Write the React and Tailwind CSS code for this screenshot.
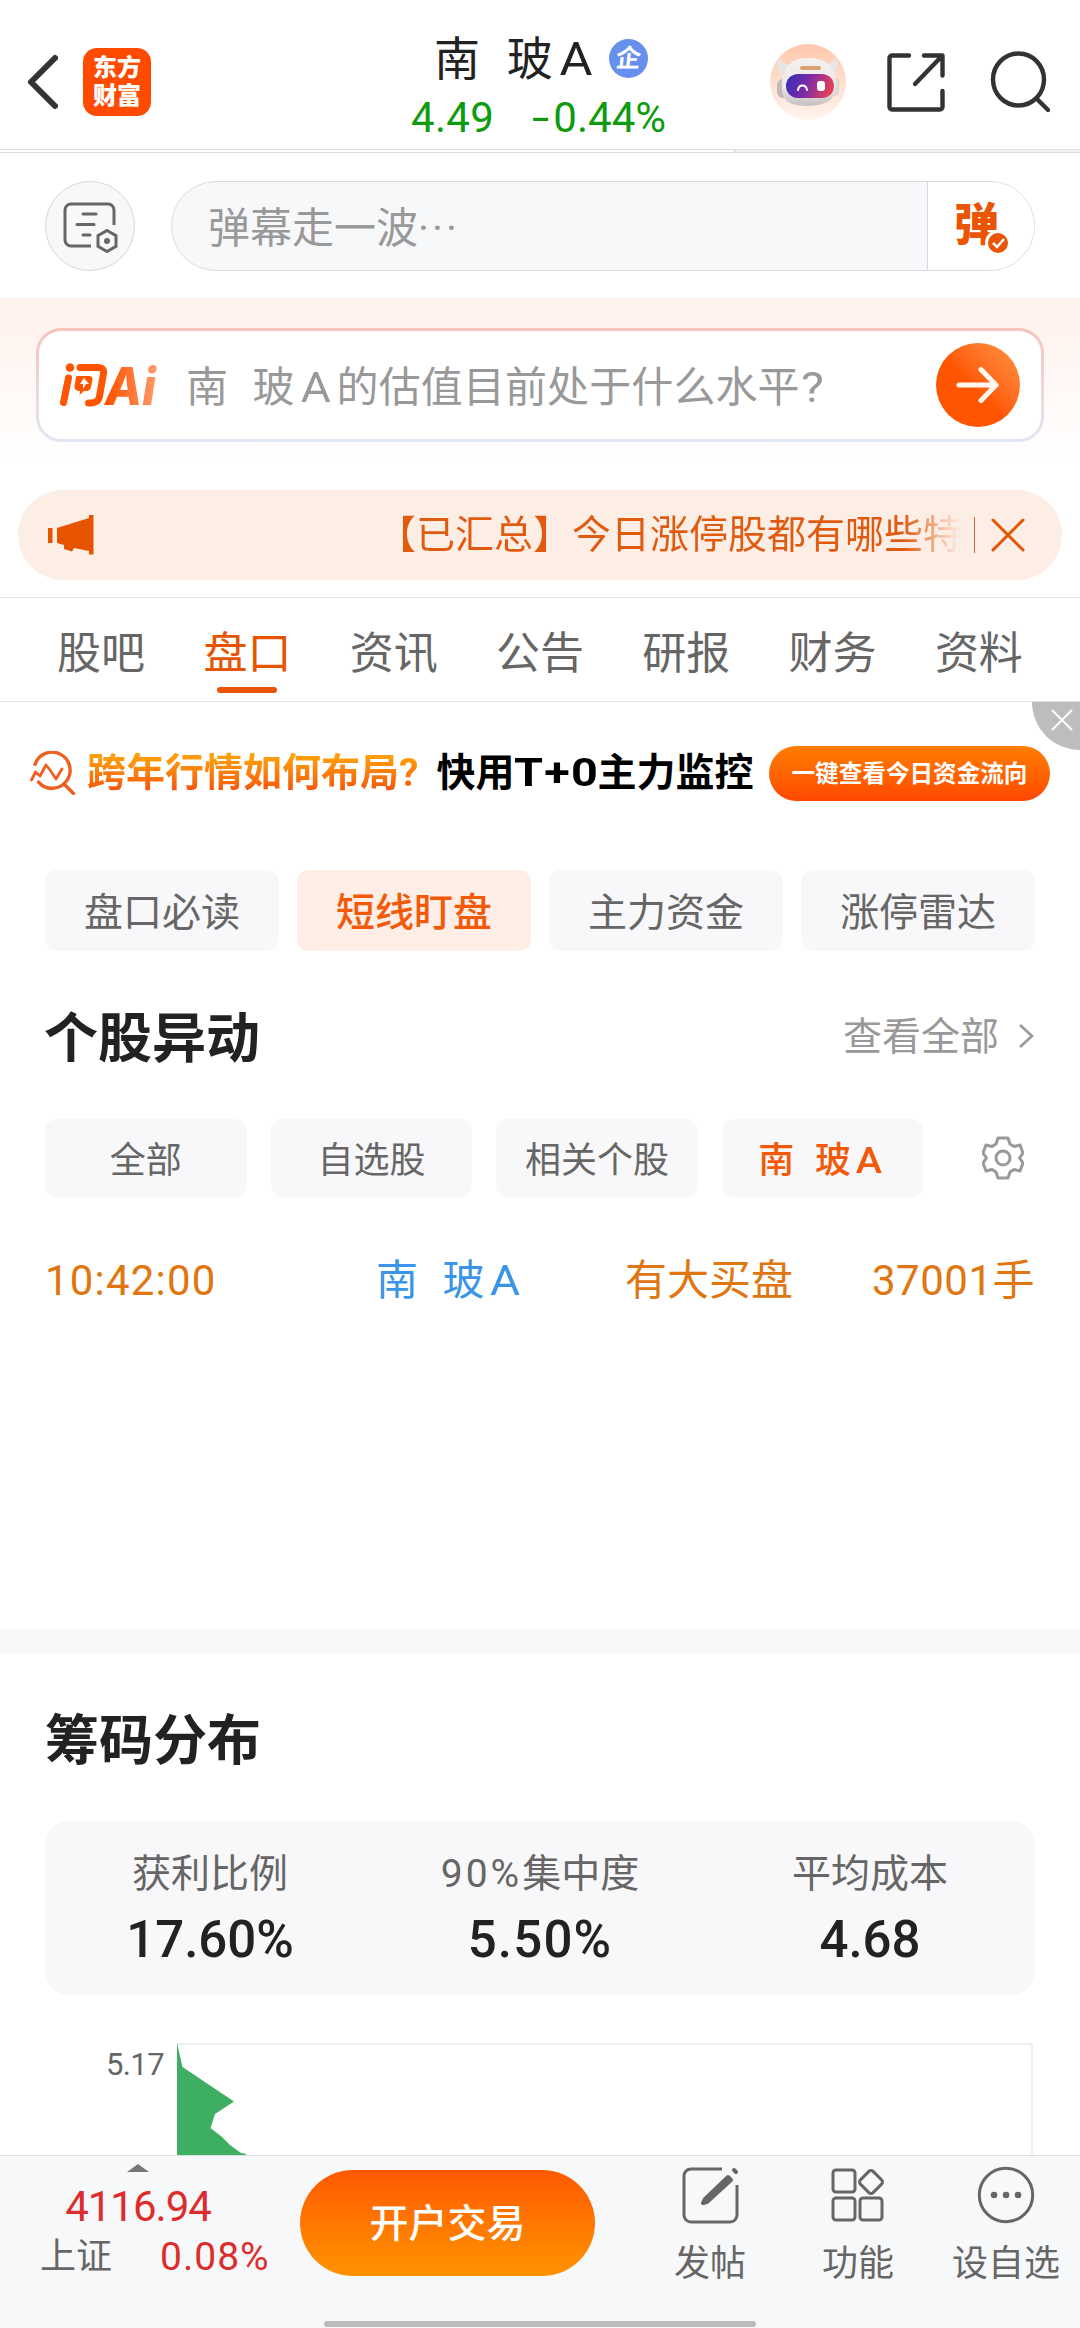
import clsx from 'clsx'

const TABS = ['股吧', '盘口', '资讯', '公告', '研报', '财务', '资料']
const SECTIONS = ['盘口必读', '短线盯盘', '主力资金', '涨停雷达']
const FILTERS = ['全部', '自选股', '相关个股']

const STATS = [
  { label: '获利比例', value: '17.60%' },
  { prefix: '90%', label: '集中度', value: '5.50%', valueClass: 'tracking-[1.200px]' },
  { label: '平均成本', value: '4.68' },
]

// the trailing letter takes a full character cell, like the hanzi before it
function StockName() {
  return (
    <span className="whitespace-pre">
      南<span className="inline-block w-[0.58em]"> </span>玻<span className="inline-block w-[1em] scale-x-110 text-center">A</span>
    </span>
  )
}

function RobotAvatar() {
  return (
    <svg viewBox="0 0 76 76" className="h-[76px] w-[76px]">
      <defs>
        <linearGradient id="avatarBg" x1="0" y1="0" x2="0" y2="1">
          <stop offset="0" stopColor="#ffc8ac" />
          <stop offset="1" stopColor="#fff4ee" />
        </linearGradient>
        <linearGradient id="visor" x1="0" y1="0" x2="1" y2="0.2">
          <stop offset="0" stopColor="#2f2fb4" />
          <stop offset="0.5" stopColor="#7a2aa8" />
          <stop offset="1" stopColor="#e0405c" />
        </linearGradient>
        <linearGradient id="helmet" x1="0" y1="0" x2="0" y2="1">
          <stop offset="0" stopColor="#f6f1f1" />
          <stop offset="0.6" stopColor="#ece7e7" />
          <stop offset="1" stopColor="#c6c0c0" />
        </linearGradient>
      </defs>
      <circle cx="38" cy="38" r="38" fill="url(#avatarBg)" />
      <path d="M12 33c-6-6-7-14-4-20 2 6 8 8 17 8zM65 31c4-7 4-13 0-18-2 6-7 7-15 7z" fill="#ebe3e2" />
      <rect x="7" y="35" width="12" height="19" rx="6" fill="#bfb9ba" />
      <rect x="60" y="34" width="9" height="18" rx="4.500" fill="#dcd6d7" />
      <path d="M38 14c17 0 27 8 28 23 1 12-3 18-9 21-10 5-28 5-37 1-7-3-9-11-8-22 2-15 10-23 26-23z" fill="url(#helmet)" />
      <rect x="30" y="22" width="21" height="4" rx="2" fill="#dfa070" />
      <rect x="16" y="30" width="48" height="24" rx="12" fill="url(#visor)" />
      <path d="M28 46c1-6 8-6 9 0" fill="none" stroke="#fff" strokeWidth="2" strokeLinecap="round" />
      <rect x="47" y="37" width="8" height="10" rx="3" fill="#fff" />
    </svg>
  )
}

function Header() {
  return (
    <header className="flex h-[149px] items-start">
      <svg viewBox="0 0 32 56" className="mt-[54px] ml-[26px] h-14 w-8" fill="none" stroke="#333" strokeWidth="6" strokeLinecap="round" strokeLinejoin="round">
        <path d="M29 4 5 28l24 24" />
      </svg>
      <div className="mt-12 ml-[25px] flex h-[68px] w-[68px] flex-col items-center justify-center rounded-[14px] bg-[#ff4a00] text-[24px] leading-[28px] font-black text-white">
        <span>东方</span>
        <span>财富</span>
      </div>
      <div className="mt-[30px] ml-[260px] w-[255px]">
        <div className="flex h-14 items-center pl-[23px]">
          <h1 className="pt-0.5 text-[46px] leading-[56px] text-[#222]"><StockName /></h1>
          <span className="ml-2.5 flex h-[39px] w-[39px] items-center justify-center rounded-full bg-[#6790ec] text-[25px] leading-none font-bold text-white">
            <span className="-skew-x-6">企</span>
          </span>
        </div>
        <div className="flex h-[60px] items-center justify-between pt-0.5 text-[42px] text-[#0f9b0f]">
          <span className="tracking-[0.300px]">4.49</span>
          <span><span className="mr-[7px] inline-block scale-x-150">-</span>0.44%</span>
        </div>
      </div>
      <div className="mt-[44px] ml-[104px]">
        <RobotAvatar />
      </div>
      <svg viewBox="0 0 58 60" className="mt-[53px] ml-[41px] h-[60px] w-[58px]" fill="none" stroke="#333" strokeWidth="4.400" strokeLinecap="round" strokeLinejoin="round">
        <path d="M22 2.500H5A2.500 2.500 0 0 0 2.500 5v49A2.500 2.500 0 0 0 5 56.500h48a2.500 2.500 0 0 0 2.500-2.500V38M37 2.500h18.500v20M54 4 28 31" />
      </svg>
      <svg viewBox="0 0 60 64" className="mt-[50px] ml-[45px] h-16 w-[60px]" fill="none" stroke="#333" strokeWidth="4.400" strokeLinecap="round">
        <ellipse cx="28.500" cy="29.500" rx="25.500" ry="26" />
        <path d="m47 49 11 11" />
      </svg>
    </header>
  )
}

function CommentBar() {
  return (
    <div className="flex h-[145px] items-center pt-0.5 pr-[45px] pb-0.5 pl-[45px]">
      <button className="flex h-[90px] w-[90px] items-center justify-center rounded-full border border-[#d5d7da] bg-[#f7f8fa]">
        <svg viewBox="0 0 56 52" className="mt-0.5 ml-0.5 h-[52px] w-14" fill="none" stroke="#666" strokeWidth="3" strokeLinecap="round">
          <path d="M51 24V9a6 6 0 0 0-6-6H8a6 6 0 0 0-6 6v30a6 6 0 0 0 6 6h20" strokeLinecap="butt" />
          <path d="M20 13h13M14 23.500h17M20 34h7" />
          <path d="m44 29.500 9 5.200v10.600l-9 5.200-9-5.200V34.700z" />
          <circle cx="44" cy="40" r="3" fill="#666" stroke="none" />
        </svg>
      </button>
      <div className="ml-9 flex h-[90px] flex-1 overflow-hidden rounded-full border border-[#d9dbde] bg-[#f7f8fa]">
        <span className="flex-1 pl-9 text-[42px] leading-[93px] text-[#999]">弹幕走一波<span className="tracking-[3px]">···</span></span>
        <button className="flex w-[107px] items-center border-l border-[#d9dbde] bg-white pl-[26px]">
          <span className="relative text-[45px] leading-[60px] font-black text-[#e95504]">
            弹
            <svg viewBox="0 0 26 26" className="absolute top-[34px] left-[31px] h-[26px] w-[26px]">
              <circle cx="13" cy="13" r="11.500" fill="#e95504" stroke="#fff" strokeWidth="3" />
              <path d="m8 13 4 4 7-8" fill="none" stroke="#fff" strokeWidth="2.500" />
            </svg>
          </span>
        </button>
      </div>
    </div>
  )
}

function AskAiLogo() {
  return (
    <svg viewBox="0 0 98 46" className="h-[46px] w-[98px] overflow-visible">
      <defs>
        <linearGradient id="askAi" x1="0" y1="0" x2="98" y2="0" gradientUnits="userSpaceOnUse">
          <stop offset="0.500" stopColor="#ff5500" />
          <stop offset="1" stopColor="#ff9a6a" />
        </linearGradient>
      </defs>
      <g fill="none" stroke="url(#askAi)" strokeWidth="7" strokeLinecap="round" strokeLinejoin="round">
        <path d="M9.500 16 4.500 40.500" />
        <path d="M21 5.500h18q6.500 0 5.500 6l-4 23q-1 6-8 6.500h-3" />
      </g>
      <circle cx="11" cy="5.500" r="4.300" fill="#ff5500" />
      <path d="M18 14h12q4 0 3.500 4l-1.500 7q-.6 4-5 4h-2l-4.500 4 .5-4q-6 0-5.500-5l1-6q.5-4 1.500-4z" fill="#ff5500" />
      <path d="m25 16 5 6h-3l-3 5v-5h-3z" fill="#fff" />
      <text x="46" y="42.500" fontSize="52" fontWeight="800" fontStyle="italic" fontFamily="Inter, sans-serif" textLength="51" lengthAdjust="spacingAndGlyphs" fill="url(#askAi)">Ai</text>
    </svg>
  )
}

function AskAi() {
  return (
    <div className="h-[192px] bg-linear-to-b from-[#fff1ec] to-white to-85% px-9 pt-[30px]">
      <div className="h-[114px] rounded-[25px] bg-linear-to-b from-[#f8c3bb] to-[#dfe7f4] p-[3px]">
        <div className="flex h-full items-center rounded-[22px] bg-white pr-[21px] pl-5">
          <AskAiLogo />
          <p className="ml-[29px] flex-1 pt-[5px] text-[42px] tracking-[0.100px] whitespace-nowrap text-[#999]">
            <StockName />的估值目前处于什么水平<span className="ml-px inline-block origin-left scale-x-115">?</span>
          </p>
          <button className="flex h-[84px] w-[84px] items-center justify-center rounded-full bg-linear-to-tr from-[#ff5500] from-45% to-[#ff9440]">
            <svg viewBox="0 0 44 38" className="h-[38px] w-11" fill="none" stroke="#fff8f0" strokeWidth="5" strokeLinecap="round" strokeLinejoin="round">
              <path d="M3 19h37M25 3.500 40 19 25 34.500" />
            </svg>
          </button>
        </div>
      </div>
    </div>
  )
}

function Notice() {
  return (
    <div className="mx-[18px] flex h-[90px] items-center rounded-full bg-[#fcede5] text-[#e65400]">
      <svg viewBox="0 0 46 40" className="ml-[30px] h-10 w-[46px] fill-current">
        <path d="M0 13h4.500v15H0zM9 13l32-10V0h4.500v39.500H41V36l-15-3-2 3.500-8-2.500v-4l-7-2z" />
      </svg>
      <p className="ml-[283px] w-[585px] bg-linear-to-r from-[#e05a10] from-90% to-[#e05a10]/5 to-99% bg-clip-text text-[39px] leading-[60px] whitespace-nowrap text-transparent">
        【已汇总】今日涨停股都有哪些特
      </p>
      <span className="ml-[12px] h-9 w-px bg-[#d06a30]" />
      <svg viewBox="0 0 34 34" className="ml-[16px] h-[34px] w-[34px]" stroke="currentColor" strokeWidth="3" strokeLinecap="round">
        <path d="m2 2 30 30M32 2 2 32" />
      </svg>
    </div>
  )
}

function Tabs() {
  return (
    <nav className="mt-[17px] flex h-[105px] justify-center border-y border-[#e0e2e4]">
      {TABS.map((tab) => (
        <button
          key={tab}
          className={clsx(
            'flex w-[146.300px] flex-col items-center pt-[26px] text-[44px] leading-[60px]',
            tab === '盘口' ? 'text-[#e65400]' : 'text-[#666]',
          )}
        >
          {tab}
          {tab === '盘口' && <span className="mt-[3px] h-1.5 w-[60px] rounded-full bg-[#e95504]" />}
        </button>
      ))}
    </nav>
  )
}

function PromoBanner() {
  return (
    <div className="relative flex h-[168px] items-start pt-11 pl-[30px] text-[39px] leading-[55px] font-bold whitespace-nowrap">
      <svg viewBox="0 0 46 44" className="mt-[5px] h-11 w-[46px]" fill="none" stroke="#ee5f22" strokeWidth="3.400" strokeLinecap="round" strokeLinejoin="round">
        <path d="M5 13.500a18 18 0 1 1 3.500 17.500q5 6.500 13 6.500" />
        <path d="m35 34 8.500 8.500" />
        <path d="m1.500 29 4-8 4.500 4 6-11 4 5 6 9 6-10" strokeWidth="2.800" />
      </svg>
      <span className="ml-[11px] bg-linear-to-b from-[#ff9d0a] from-20% to-[#f5500c] to-85% bg-clip-text text-transparent">跨年行情如何布局?</span>
      <span className="ml-[18px] text-black">
        快用<span className="inline-block w-[83px] origin-left scale-x-120"><span className="tracking-[1px]">T+0</span></span>主力监控
      </span>
      <button className="absolute top-11 left-[769px] h-[55px] w-[281px] rounded-full bg-linear-to-b from-[#ff7d00] to-[#ff4600] text-center text-[23.600px] leading-[56px] text-white">
        一键查看今日资金流向
      </button>
      <button className="absolute top-0 right-0 h-12 w-12 rounded-bl-full bg-[#bdbdbd]">
        <svg viewBox="0 0 22 22" className="mt-[-12px] ml-[19px] h-[22px] w-[22px]" stroke="#fff" strokeWidth="2">
          <path d="m1 1 20 20M21 1 1 21" />
        </svg>
      </button>
    </div>
  )
}

function StockMoves() {
  return (
    <section className="px-[45px]">
      <div className="flex h-[81px] gap-[18px]">
        {SECTIONS.map((name) => (
          <button
            key={name}
            className={clsx(
              'flex-1 rounded-xl pt-[5px] text-[39px]',
              name === '短线盯盘' ? 'bg-[#ffeee6] font-medium text-[#f25a0a]' : 'bg-[#f8f8fa] text-[#666]',
            )}
          >
            {name}
          </button>
        ))}
      </div>

      <div className="mt-[50px] flex h-[72px] items-center">
        <h2 className="-ml-px flex-1 pt-[5px] text-[54px] font-bold text-[#222]">个股异动</h2>
        <span className="text-[39px] text-[#999]">查看全部</span>
        <svg viewBox="0 0 16 26" className="mr-px mb-0.5 ml-[19px] h-[26px] w-4" fill="none" stroke="#999" strokeWidth="2.600">
          <path d="m2 2 12 11L2 24" />
        </svg>
      </div>

      <div className="mt-[46px] flex h-[78px] items-center gap-6 text-[36px] text-[#666]">
        {FILTERS.map((name) => (
          <button key={name} className="h-full w-[201.600px] rounded-xl bg-[#f8f8fa] pt-[5px]">{name}</button>
        ))}
        <button className="h-full w-[201.600px] rounded-xl bg-[#f8f8fa] pt-[5px] font-medium text-[#f25a0a]"><StockName /></button>
        <svg viewBox="0 0 42 44" className="ml-[35px] h-11 w-[42px]" fill="none" stroke="#999" strokeWidth="3" strokeLinejoin="round">
          <path d="M16 2h10l2 6 4 2.500 6-1.500 3 8-3.500 5 3.500 5-3 8-6-1.500-4 2.500-2 6H16l-2-6-4-2.500L4 35l-3-8 3.500-5L1 17l3-8 6 1.500L14 8z" />
          <circle cx="21" cy="22" r="7" />
        </svg>
      </div>

      <div className="mt-[50px] flex h-[67px] items-center text-[42px] text-[#e07610]">
        <span className="w-[331px] tracking-[1.200px]">10:42:00</span>
        <span className="w-[249px] text-[#3b95e6]"><StockName /></span>
        <span className="flex-1">有大买盘</span>
        <span className="tracking-[0.500px]">37001手</span>
      </div>
    </section>
  )
}

function ChipDistribution() {
  return (
    <section className="px-[45px] pt-[52px]">
      <h2 className="h-[72px] text-[54px] leading-[73px] font-bold text-[#222]">筹码分布</h2>
      <div className="mt-[44px] flex h-[174px] rounded-3xl bg-[#f8f8fa] pt-[23px]">
        {STATS.map(({ prefix, label, value, valueClass }) => (
          <div key={label} className="flex-1 text-center">
            <div className="h-[60px] text-[39px] leading-[60px] text-[#666]">
              {prefix && <span className="tracking-[3px]">{prefix}</span>}
              {label}
            </div>
            <div className={clsx('text-[51px] leading-[72px] font-medium text-[#222]', valueClass)}>{value}</div>
          </div>
        ))}
      </div>
      <div className="mt-12 flex h-[112px]">
        <span className="w-[132px] pt-[4px] pr-[13px] text-right text-[31px] leading-[36px] tracking-[-0.600px] text-[#666]">5.17</span>
        <div className="w-[856px] border-t-2 border-r-2 border-[#efefef]">
          <svg viewBox="0 0 72 112" className="-mt-0.5 h-[112px] w-[72px]">
            <path d="M0 0 5.500 24 57 58.500 38 71 33.500 85 45 94l8 8 11 8 5 1v1H0z" fill="#3eae62" />
          </svg>
        </div>
      </div>
    </section>
  )
}

function NavItem({ label, className, children }) {
  return (
    <button className={clsx('flex flex-col items-center text-[36px] leading-[52px] text-[#666]', className)}>
      <svg viewBox="0 0 60 60" className="h-[60px] w-[60px]" fill="none" stroke="#666" strokeWidth="3" strokeLinecap="round" strokeLinejoin="round">
        {children}
      </svg>
      <span className="mt-[13px]">{label}</span>
    </button>
  )
}

function BottomBar() {
  return (
    <footer className="flex h-[173px] flex-col border-t border-[#dcdfe2] bg-[#f7f8fa]">
      <div className="flex h-[165px]">
        <div className="w-[300px]">
          <svg viewBox="0 0 22 8" className="mt-2 ml-[127px] h-2 w-[22px] fill-[#777]">
            <path d="M11 0 22 8H0z" />
          </svg>
          <div className="mt-[10px] w-[276px] text-center text-[42px] leading-[50px] tracking-[-1px] text-[#dd2c2c]">4116.94</div>
          <div className="flex h-[50px] items-center pl-10 text-[36px] text-[#666]">
            上证
            <span className="ml-[48px] text-[39px] tracking-[1px] text-[#dd2c2c]">0.08%</span>
          </div>
        </div>
        <button className="mt-[14px] h-[106px] w-[295px] rounded-full bg-linear-to-b from-[#ff5800] to-[#ff9200] pt-[3px] text-[39px] font-medium text-white">
          开户交易
        </button>
        <NavItem label="发帖" className="mt-[9px] ml-[55px] w-[120px]">
          <path d="M42 4H11a7 7 0 0 0-7 7v39a7 7 0 0 0 7 7h39a7 7 0 0 0 7-7V20" strokeLinecap="butt" />
          <path d="m48 12 3 3-24 22-4 1 2-4zM54 5l2 2" fill="#666" strokeWidth="4" />
        </NavItem>
        <NavItem label="功能" className="mt-[9px] ml-[28px] w-[120px]">
          <rect x="5" y="5" width="22" height="22" rx="3" />
          <rect x="5" y="33" width="22" height="22" rx="3" />
          <rect x="32" y="33" width="22" height="22" rx="3" />
          <rect x="34" y="8" width="18" height="18" rx="3" transform="rotate(45 43 17)" />
        </NavItem>
        <NavItem label="设自选" className="mt-[9px] ml-[28px] w-[120px]">
          <circle cx="30" cy="30" r="26.700" />
          <path d="M18 30h.1M30 30h.1M42 30h.1" strokeWidth="6.500" />
        </NavItem>
      </div>
      <div className="mx-auto h-1.5 w-[432px] rounded-full bg-[#bbbcbe]" />
    </footer>
  )
}

export default function App() {
  return (
    <div className="flex h-[2328px] w-[1080px] flex-col overflow-hidden bg-white font-[Roboto,'Noto_Sans_CJK_SC',sans-serif]">
      <Header />
      <div className="flex h-1 justify-end border-y border-[#dedede]">
        <div className="w-[346px] border-l border-[#cccccc] bg-[#f4eeed]" />
      </div>
      <CommentBar />
      <AskAi />
      <Notice />
      <Tabs />
      <PromoBanner />
      <StockMoves />
      <div className="mt-[315px] h-6 shrink-0 bg-[#f8f8fa]" />
      <ChipDistribution />
      <BottomBar />
    </div>
  )
}
